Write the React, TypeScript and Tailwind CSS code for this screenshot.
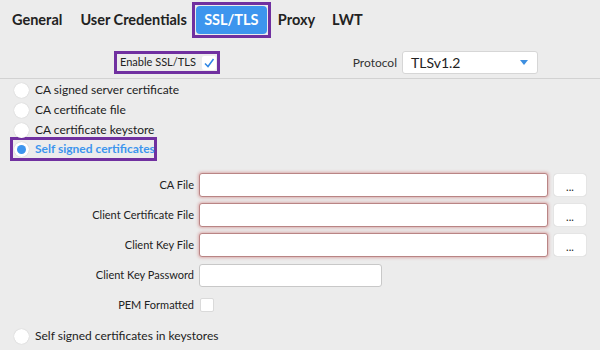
import React from 'react';

const Radio: React.FC<{ label: string; checked?: boolean }> = ({ label, checked }) => (
  <div className="flex items-center h-5 whitespace-nowrap">
    <span className="w-[15px] h-[15px] rounded-full bg-white shadow-[0_0_1px_rgba(0,0,0,0.25)] flex items-center justify-center">
      {checked && <span className="w-[9px] h-[9px] rounded-full bg-[#3d95ee]"></span>}
    </span>
    <span className={`ml-[6px] text-[12px] ${checked ? 'text-[#3d95ee] font-bold' : 'text-[#222]'}`}>{label}</span>
  </div>
);

const FileRow: React.FC<{ label: string }> = ({ label }) => (
  <div className="flex items-center h-6">
    <div className="w-[194px] text-right text-[11px] text-[#222] whitespace-nowrap">{label}</div>
    <div className="ml-[5px] w-[349px] h-6 bg-white rounded-[3px] border border-[#b98585] shadow-[0_0_3px_1px_rgba(200,100,100,0.45)]"></div>
    <button className="ml-[6px] w-8 h-[22px] bg-white rounded-[3px] shadow-[0_0_1px_rgba(0,0,0,0.3)] text-[11px] leading-none pb-[4px] flex items-end justify-center">...</button>
  </div>
);

export default function App() {
  return (
    <div className="w-[600px] h-[350px] bg-[#ececec] overflow-hidden font-['Lato','Liberation_Sans',sans-serif] text-[#222]">
      <div className="flex items-center h-10 text-[14.5px] font-bold whitespace-nowrap">
        <span className="ml-3">General</span>
        <span className="ml-[18px]">User Credentials</span>
        <div className="ml-[5px] border-[3px] border-[#7030a0] p-px">
          <div className="h-7 w-[71px] rounded-[4px] bg-[#3d95ee] text-white flex items-center justify-center">SSL/TLS</div>
        </div>
        <span className="ml-[7px]">Proxy</span>
        <span className="ml-[17px]">LWT</span>
      </div>

      <div className="flex items-center mt-[11px] h-[23px] whitespace-nowrap">
        <div className="ml-[114px] w-[106px] h-[23px] border-[3px] border-[#7030a0] flex items-center">
          <span className="ml-[3px] text-[11px] text-[#222]">Enable SSL/TLS</span>
          <span className="ml-[6px] w-[14px] h-[14px] bg-white rounded-[2px] flex items-center justify-center">
            <svg width="12" height="12" viewBox="0 0 12 12" fill="none">
              <path d="M2 6.5l3 3L10.5 2" stroke="#2f86e4" strokeWidth="1.5" />
            </svg>
          </span>
        </div>
        <span className="ml-auto text-[12px] text-[#333]">Protocol</span>
        <div className="ml-[5px] mr-[62px] w-[136px] h-[23px] bg-white rounded-[3px] border border-[#d6d6d6] flex items-center justify-between px-2">
          <span className="text-[14px] text-[#222]">TLSv1.2</span>
          <svg width="8" height="5" viewBox="0 0 8 5" className="mr-[1px]">
            <path d="M0 0h8L4 5z" fill="#3d8fe0" />
          </svg>
        </div>
      </div>

      <div className="mt-1 border-t border-[#d2d2d2]"></div>

      <div className="pl-[14px] mt-px">
        <Radio label="CA signed server certificate" />
        <Radio label="CA certificate file" />
        <Radio label="CA certificate keystore" />
      </div>
      <div className="ml-[10px] mt-[-3px] w-[147px] h-6 border-[3px] border-[#7030a0] flex items-center pl-px">
        <Radio label="Self signed certificates" checked />
      </div>

      <div className="mt-3 flex flex-col gap-[6px]">
        <FileRow label="CA File" />
        <FileRow label="Client Certificate File" />
        <FileRow label="Client Key File" />
        <div className="flex items-center h-6">
          <div className="w-[194px] text-right text-[11px] text-[#222] whitespace-nowrap">Client Key Password</div>
          <div className="ml-[5px] w-[183px] h-[23px] bg-white rounded-[3px] border border-[#c8c8c8]"></div>
        </div>
        <div className="flex items-center h-6">
          <div className="w-[194px] text-right text-[11px] text-[#222] whitespace-nowrap">PEM Formatted</div>
          <span className="ml-[6px] w-[14px] h-[14px] bg-white rounded-[2px] border border-[#dadada]"></span>
        </div>
      </div>

      <div className="pl-[14px] mt-[9px]">
        <Radio label="Self signed certificates in keystores" />
      </div>
    </div>
  );
}
